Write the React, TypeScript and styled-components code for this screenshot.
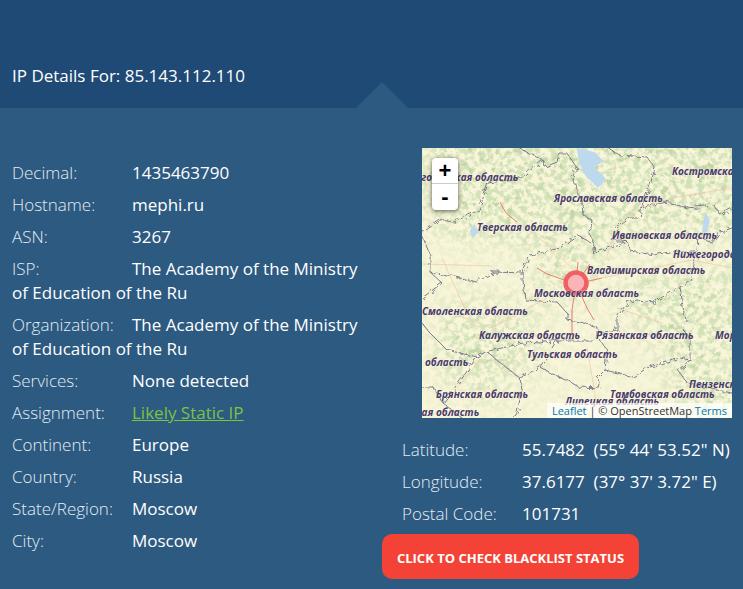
import styled, { createGlobalStyle } from "styled-components";

const GlobalStyle = createGlobalStyle`
  html, body {
    margin: 0;
    padding: 0;
    background: #2d5a80;
    overflow: hidden;
  }
  * {
    box-sizing: border-box;
  }
`;

const Page = styled.div`
  width: 743px;
  height: 589px;
  overflow: hidden;
  background: #2d5a80;
  color: #fff;
  font-family: "Open Sans", sans-serif;
  font-size: 17px;
  line-height: 24px;
`;

const Header = styled.header`
  position: relative;
  height: 108px;
  padding: 64px 12px 0;
  background: #1f4a75;
`;

const Notch = styled.span`
  position: absolute;
  left: 356px;
  bottom: 0;
  width: 0;
  height: 0;
  border-left: 26px solid transparent;
  border-right: 26px solid transparent;
  border-bottom: 26px solid #2d5a80;
`;

const Content = styled.main`
  display: flex;
  align-items: flex-start;
`;

const LeftColumn = styled.section`
  width: 382px;
  padding: 53px 12px 0;
`;

const RightColumn = styled.section`
  width: 361px;
  padding-top: 40px;
`;

const Row = styled.div`
  margin-bottom: 8px;
`;

const Label = styled.span`
  display: inline-block;
  width: 120px;
  font-weight: 300;
  color: #e3edf5;
`;

const Value = styled.span`
  color: #fff;
`;

const StaticLink = styled.a`
  color: #7cc243;
  text-decoration: underline;
`;

const MapFrame = styled.div`
  position: relative;
  width: 310px;
  height: 270px;
  margin-left: 40px;
  overflow: hidden;
  background: #f8f5d9;
`;

const MapArt = styled.svg`
  display: block;
`;

const ZoomControl = styled.div`
  position: absolute;
  top: 10px;
  left: 10px;
  width: 26px;
  border-radius: 4px;
  background: #fff;
  box-shadow: 0 1px 5px rgba(0, 0, 0, 0.65);
`;

const ZoomButton = styled.div<{ $last?: boolean }>`
  height: 26px;
  font-family: "Liberation Sans", sans-serif;
  font-size: 22px;
  font-weight: 700;
  line-height: 26px;
  text-align: center;
  color: #000;
  border-bottom: ${(p) => (p.$last ? "none" : "1px solid #ccc")};
`;

const Attribution = styled.div`
  position: absolute;
  right: 0;
  bottom: 0;
  padding: 0 5px;
  background: rgba(255, 255, 255, 0.72);
  color: #333;
  font-size: 11px;
  line-height: 15px;
`;

const AttrLink = styled.a`
  color: #0078a8;
`;

const GeoList = styled.div`
  margin-top: 20px;
  padding-left: 20px;
`;

const BlacklistButton = styled.button`
  display: block;
  width: 257px;
  height: 45px;
  margin-top: 2px;
  padding: 2px 0 0;
  border: none;
  border-radius: 10px;
  background: #f44336;
  color: #fff;
  font-family: "Open Sans", sans-serif;
  font-size: 13px;
  font-weight: 700;
  text-transform: uppercase;
`;

const leftRows = [
  ["Decimal:", "1435463790"],
  ["Hostname:", "mephi.ru"],
  ["ASN:", "3267"],
  ["ISP:", "The Academy of the Ministry of Education of the Ru"],
  ["Organization:", "The Academy of the Ministry of Education of the Ru"],
  ["Services:", "None detected"],
];

const lowerRows = [
  ["Continent:", "Europe"],
  ["Country:", "Russia"],
  ["State/Region:", "Moscow"],
  ["City:", "Moscow"],
];

const geoRows = [
  ["Latitude:", "55.7482\u00a0 (55° 44' 53.52\" N)"],
  ["Longitude:", "37.6177\u00a0 (37° 37' 3.72\" E)"],
  ["Postal Code:", "101731"],
];

const mapLabels: [string, number, number][] = [
  ["Костромская", 250, 27],
  ["Новгородская область", -19, 33],
  ["Ярославская область", 132, 54],
  ["Тверская область", 55, 83],
  ["Ивановская область", 190, 91],
  ["Нижегородская", 251, 110],
  ["Владимирская область", 165, 126],
  ["Московская область", 112, 149],
  ["Смоленская область", 0, 167],
  ["Калужская область", 57, 191],
  ["Рязанская область", 174, 191],
  ["Мордовия", 293, 191],
  ["Тульская область", 105, 210],
  ["область", 3, 218],
  ["Пензенская", 267, 240],
  ["Брянская область", 14, 250],
  ["Тамбовская область", 188, 250],
  ["Липецкая область", 143, 257],
  ["Орловская область", -42, 268],
];

const borders = [
  "M97,0 L108,6 121,12 123,19 135,14 137,5 145,5 155,20 150,30 155,40 160,54 161,67 170,72 168,87 173,97 171,107 175,104",
  "M185,0 L198,7 225,9 233,20 228,37 220,57 218,70 208,70 195,80 190,93 205,93 208,103 232,107 252,103 275,103 276,88 290,95 298,84 310,80",
  "M218,60 L245,54 265,60 292,57 298,67 310,60",
  "M121,12 L99,30 66,35 57,62 32,74 18,72 0,85",
  "M0,87 L8,107 8,124 20,135 0,150",
  "M168,94 L155,87 138,100 108,107 105,114 101,125 72,124 55,134 30,128 8,124",
  "M101,125 L101,132 103,152 135,154 145,165 145,172 158,174 175,179 175,187 171,192 135,192 118,195 105,194 63,204 55,209",
  "M0,175 L8,185 25,202 55,209 41,229 21,255 11,239 0,239",
  "M65,204 L85,220 98,230 118,219 128,225 145,232 155,238 158,239 178,240 175,230 183,222 185,202 178,192",
  "M118,219 L135,192",
  "M98,230 L100,242 95,265 92,270",
  "M183,222 L211,229 225,220 258,210 268,212 268,192 262,182",
  "M268,212 L256,222 265,235 285,240 310,245",
  "M175,185 L195,182 195,169 205,155 215,152 232,154 258,139 263,172 268,174",
  "M258,139 L268,132 275,105",
  "M21,255 L40,270",
  "M175,104 L205,93",
];

const roads = [
  "M78,54 L84,65 95,74",
  "M154,136 L150,162 150,186",
  "M154,136 L165,160 172,172",
  "M154,136 L125,126 115,120",
  "M154,136 L168,116",
  "M154,136 L180,130",
  "M154,136 L156,114",
];

const minorRoads = [
  "M95,74 L130,100 154,125",
  "M30,165 L70,180 125,150",
  "M165,200 L172,240 175,262",
  "M100,200 L80,225",
  "M20,110 L45,165",
  "M185,108 L196,80 215,58",
  "M220,60 L250,50 310,40",
  "M180,130 L240,118 270,112 310,120",
  "M0,116 L70,118",
  "M195,160 L240,175",
  "M60,210 L35,240",
];

function TileMap() {
  return (
    <MapArt width="310" height="270" viewBox="0 0 310 270">
      <defs>
        <filter id="forest" x="0" y="0" width="100%" height="100%" colorInterpolationFilters="sRGB">
          <feTurbulence type="fractalNoise" baseFrequency="0.17" numOctaves="4" seed="7" />
          <feColorMatrix values="0 0 0 0 0.82  0 0 0 0 0.885  0 0 0 0 0.72  5 0 0 0 -2.2" />
          <feGaussianBlur stdDeviation="0.4" />
        </filter>
        <filter id="forestDark" x="0" y="0" width="100%" height="100%" colorInterpolationFilters="sRGB">
          <feTurbulence type="fractalNoise" baseFrequency="0.13" numOctaves="4" seed="21" />
          <feColorMatrix values="0 0 0 0 0.76  0 0 0 0 0.84  0 0 0 0 0.65  6 0 0 0 -3.5" />
          <feGaussianBlur stdDeviation="0.4" />
        </filter>
        <filter id="soft">
          <feGaussianBlur stdDeviation="16" />
        </filter>
        <filter id="wiggle" x="-5%" y="-5%" width="110%" height="110%">
          <feTurbulence type="fractalNoise" baseFrequency="0.2" numOctaves="2" seed="3" result="n" />
          <feDisplacementMap in="SourceGraphic" in2="n" scale="7" />
        </filter>
        <mask id="woodland">
          <rect width="310" height="270" fill="#2c2c2c" />
          <g filter="url(#soft)" fill="#fff">
            <polygon points="0,-20 320,-20 320,90 240,85 170,105 100,95 20,85 0,60" />
            <polygon points="195,130 320,120 320,210 260,225 210,170" />
            <polygon points="30,150 115,165 110,215 60,255 10,210" />
            <polygon points="255,220 320,230 320,280 250,280" />
            <polygon points="115,105 175,110 165,155 115,150" />
          </g>
        </mask>
      </defs>
      <rect width="310" height="270" fill="#f8f5d9" />
      <g mask="url(#woodland)">
        <rect width="310" height="270" filter="url(#forest)" />
        <rect width="310" height="270" filter="url(#forestDark)" />
      </g>
      <g fill="#bcd9ee">
        <polygon points="155,0 172,4 182,13 172,19 184,31 176,40 163,27 157,14" />
        <polygon points="283,65 288,72 284,88 280,84" />
        <polygon points="48,83 52,76 57,84 50,90" />
      </g>
      <g fill="none" stroke="#f1cbaa" strokeWidth="0.8">
        {minorRoads.map((d) => (
          <path key={d} d={d} />
        ))}
      </g>
      <g fill="none" stroke="#ec6f64" strokeWidth="0.9">
        {roads.map((d) => (
          <path key={d} d={d} />
        ))}
      </g>
      <g fill="none" stroke="#6f6d85" strokeWidth="0.9" strokeLinejoin="round" filter="url(#wiggle)">
        {borders.map((d) => (
          <path key={d} d={d} />
        ))}
      </g>
      <circle cx="154" cy="135" r="10.5" fill="#f9b4b8" stroke="#f0545a" strokeWidth="4.5" strokeOpacity="0.9" />
      <g
        fontFamily="'Open Sans', sans-serif"
        fontSize="10"
        fontWeight="700"
        fontStyle="italic"
        fill="#4b3a66"
        stroke="rgba(255,255,255,0.4)"
        strokeWidth="1.2"
        style={{ paintOrder: "stroke" }}
      >
        {mapLabels.map(([name, x, y]) => (
          <text key={name} x={x} y={y}>
            {name}
          </text>
        ))}
      </g>
    </MapArt>
  );
}

export default function App() {
  return (
    <Page>
      <GlobalStyle />
      <Header>
        IP Details For: 85.143.112.110
        <Notch />
      </Header>
      <Content>
        <LeftColumn>
          {leftRows.map(([label, value]) => (
            <Row key={label}>
              <Label>{label}</Label>
              <Value>{value}</Value>
            </Row>
          ))}
          <Row>
            <Label>Assignment:</Label>
            <StaticLink href="#">Likely Static IP</StaticLink>
          </Row>
          {lowerRows.map(([label, value]) => (
            <Row key={label}>
              <Label>{label}</Label>
              <Value>{value}</Value>
            </Row>
          ))}
        </LeftColumn>
        <RightColumn>
          <MapFrame>
            <TileMap />
            <ZoomControl>
              <ZoomButton>+</ZoomButton>
              <ZoomButton $last>-</ZoomButton>
            </ZoomControl>
            <Attribution>
              <AttrLink>Leaflet</AttrLink> | © OpenStreetMap <AttrLink>Terms</AttrLink>
            </Attribution>
          </MapFrame>
          <GeoList>
            {geoRows.map(([label, value]) => (
              <Row key={label}>
                <Label>{label}</Label>
                <Value>{value}</Value>
              </Row>
            ))}
          </GeoList>
          <BlacklistButton>Click to check blacklist status</BlacklistButton>
        </RightColumn>
      </Content>
    </Page>
  );
}
